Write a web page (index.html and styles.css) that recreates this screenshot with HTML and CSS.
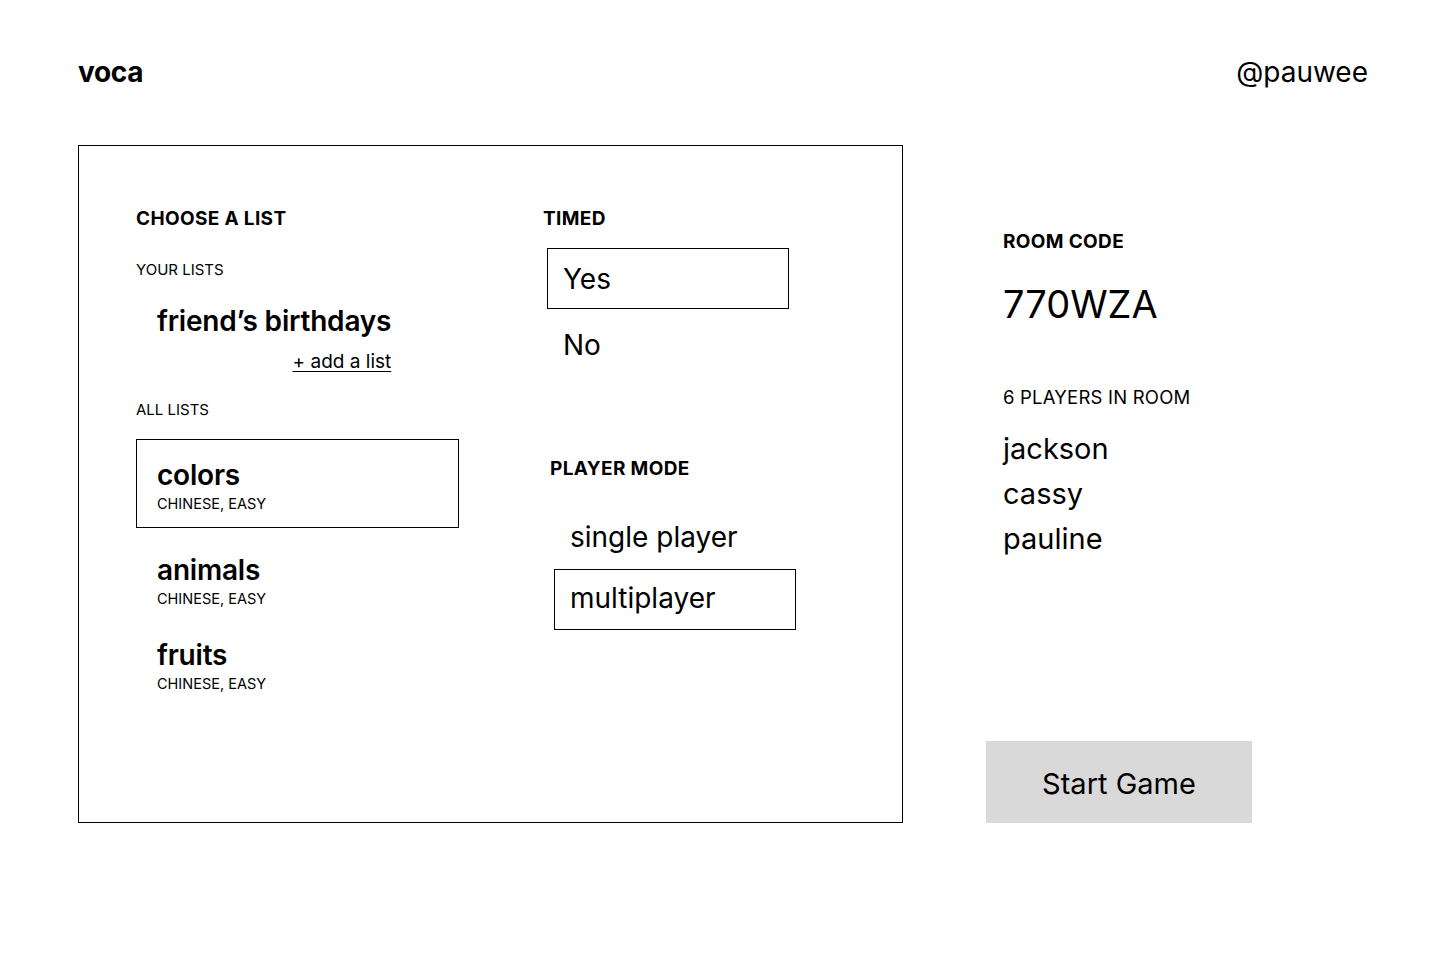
FILE: index.html
```html
<!DOCTYPE html>
<html lang="en">
<head>
<meta charset="utf-8">
<title>voca</title>
<link rel="stylesheet" href="styles.css">
</head>
<body>
<header class="topbar">
  <div class="logo">voca</div>
  <div class="user">@pauwee</div>
</header>
<main class="main">
  <section class="panel">
    <div class="col col-lists">
      <h2 class="heading">CHOOSE A LIST</h2>
      <div class="label label-your">YOUR LISTS</div>
      <div class="your-lists">
        <div class="list-title">friend’s birthdays</div>
        <a class="add-link" href="#">+ add a list</a>
      </div>
      <div class="label label-all">ALL LISTS</div>
      <div class="all-lists">
        <div class="item selected">
          <div class="list-title">colors</div>
          <div class="list-sub">CHINESE, EASY</div>
        </div>
        <div class="item">
          <div class="list-title">animals</div>
          <div class="list-sub">CHINESE, EASY</div>
        </div>
        <div class="item">
          <div class="list-title">fruits</div>
          <div class="list-sub">CHINESE, EASY</div>
        </div>
      </div>
    </div>
    <div class="col col-options">
      <div class="group group-timed">
        <h2 class="heading">TIMED</h2>
        <div class="options">
          <div class="option selected">Yes</div>
          <div class="option">No</div>
        </div>
      </div>
      <div class="group group-mode">
        <h2 class="heading">PLAYER MODE</h2>
        <div class="options options-mode">
          <div class="option">single player</div>
          <div class="option selected">multiplayer</div>
        </div>
      </div>
    </div>
  </section>
  <aside class="room">
    <h2 class="heading">ROOM CODE</h2>
    <div class="code">770WZA</div>
    <div class="players-label">6 PLAYERS IN ROOM</div>
    <ul class="players">
      <li>jackson</li>
      <li>cassy</li>
      <li>pauline</li>
    </ul>
    <button class="start" type="button">Start Game</button>
  </aside>
</main>
</body>
</html>
```
FILE: styles.css
```css
* { box-sizing: border-box; }
html, body { margin: 0; padding: 0; background: #fff; }
body {
  font-family: Inter, "Liberation Sans", sans-serif;
  color: #000;
  width: 1440px;
  height: 968px;
}
h2 { margin: 0; }

.topbar {
  display: flex;
  justify-content: space-between;
  padding: 55px 72px 0 78px;
  height: 89px;
  font-size: 28px;
  line-height: 34px;
}
.logo { font-weight: 700; letter-spacing: -0.3px; }
.user { font-weight: 400; }

.main {
  display: flex;
  gap: 83px;
  margin-top: 56px;
  padding-left: 78px;
}

.panel {
  width: 825px;
  height: 678px;
  border: 1px solid #000;
  padding: 61px 0 0 57px;
  display: grid;
  grid-template-columns: 407px 1fr;
  align-items: start;
}

.heading {
  font-size: 19px;
  line-height: 24px;
  font-weight: 700;
  letter-spacing: 0.35px;
}

.label {
  font-size: 15px;
  line-height: 18px;
  font-weight: 400;
}
.label-your { margin-top: 30px; }
.label-all { margin-top: 27px; }

.your-lists {
  display: inline-flex;
  flex-direction: column;
  align-items: flex-end;
  margin-top: 25px;
  padding-left: 21px;
}
.list-title {
  font-size: 28px;
  line-height: 34px;
  font-weight: 600;
  letter-spacing: -0.2px;
}
.add-link {
  margin-top: 12px;
  font-size: 19px;
  line-height: 24px;
  color: #000;
  text-decoration: underline;
  text-underline-offset: 3px;
  text-decoration-thickness: 1px;
}

.all-lists {
  display: flex;
  flex-direction: column;
  margin-top: 20px;
  width: 323px;
}
.item { padding: 0 21px; }
.item.selected {
  border: 1px solid #000;
  padding: 18px 20px 15px;
}
.item + .item { margin-top: 31px; }
.selected + .item { margin-top: 25px; }
.list-sub {
  margin-top: 3px;
  font-size: 14.5px;
  line-height: 17px;
  font-weight: 400;
}

.options {
  display: flex;
  flex-direction: column;
  gap: 5px;
  margin-top: 17px;
  margin-left: 4px;
  width: 242px;
}
.option {
  height: 61px;
  border: 1px solid transparent;
  padding: 13px 15px 0;
  font-size: 28px;
  line-height: 34px;
  font-weight: 400;
}
.option.selected { border-color: #000; }

.group-mode {
  margin-top: 82px;
  margin-left: 7px;
}
.options-mode { margin-top: 27px; gap: 0; }
.options-mode .option { padding-top: 11px; }

.room {
  width: 266px;
  height: 678px;
  display: flex;
  flex-direction: column;
  padding-top: 85px;
}
.room .heading { padding-left: 17px; }
.code {
  padding-left: 17px;
  margin-top: 27px;
  font-size: 38px;
  line-height: 46px;
  font-weight: 400;
}
.players-label {
  padding-left: 17px;
  margin-top: 58px;
  font-size: 18.5px;
  line-height: 24px;
  font-weight: 400;
  letter-spacing: 0.2px;
}
.players {
  list-style: none;
  margin: 17px 0 0;
  padding: 0 0 0 17px;
  font-size: 29px;
  line-height: 45px;
}
.start {
  margin-top: auto;
  height: 82px;
  width: 266px;
  border: 0;
  background: #d9d9d9;
  font-family: inherit;
  font-size: 29px;
  color: #000;
  padding: 2px 0 0;
  cursor: pointer;
}
```
